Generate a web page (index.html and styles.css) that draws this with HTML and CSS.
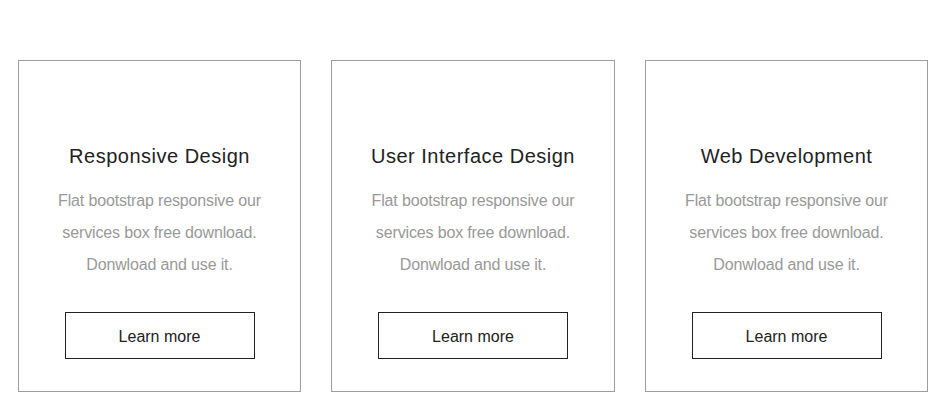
FILE: index.html
```html
<!DOCTYPE html>
<html>
<head>
<meta charset="utf-8">
<link rel="stylesheet" href="styles.css">
</head>
<body>
<div class="services">
  <div class="card">
    <h3 class="title">Responsive Design</h3>
    <p class="text">Flat bootstrap responsive our services box free download. Donwload and use it.</p>
    <a class="btn">Learn more</a>
  </div>
  <div class="card">
    <h3 class="title">User Interface Design</h3>
    <p class="text">Flat bootstrap responsive our services box free download. Donwload and use it.</p>
    <a class="btn">Learn more</a>
  </div>
  <div class="card">
    <h3 class="title">Web Development</h3>
    <p class="text">Flat bootstrap responsive our services box free download. Donwload and use it.</p>
    <a class="btn">Learn more</a>
  </div>
</div>
</body>
</html>
```
FILE: styles.css
```css
html, body {
  margin: 0;
  padding: 0;
  background: #fff;
}
body {
  font-family: "Liberation Sans", Arial, sans-serif;
}
.services {
  display: grid;
  grid-template-columns: 283px 284px 283px;
  column-gap: 30px;
  padding: 60px 0 0 18px;
}
.card {
  height: 332px;
  box-sizing: border-box;
  border: 1px solid #9e9e9e;
  display: flex;
  flex-direction: column;
  align-items: center;
  padding: 84px 20px 0;
  text-align: center;
}
.title {
  margin: 0;
  font-size: 20px;
  font-weight: normal;
  line-height: 22px;
  letter-spacing: 0.5px;
  color: #222;
}
.text {
  margin: 18px 0 0;
  font-size: 16px;
  line-height: 32px;
  letter-spacing: -0.15px;
  color: #999;
  width: 215px;
}
.btn {
  margin-top: 31px;
  width: 190px;
  height: 47px;
  box-sizing: border-box;
  border: 1px solid #222;
  display: flex;
  align-items: center;
  justify-content: center;
  padding-top: 2px;
  font-size: 16px;
  color: #222;
}
```
